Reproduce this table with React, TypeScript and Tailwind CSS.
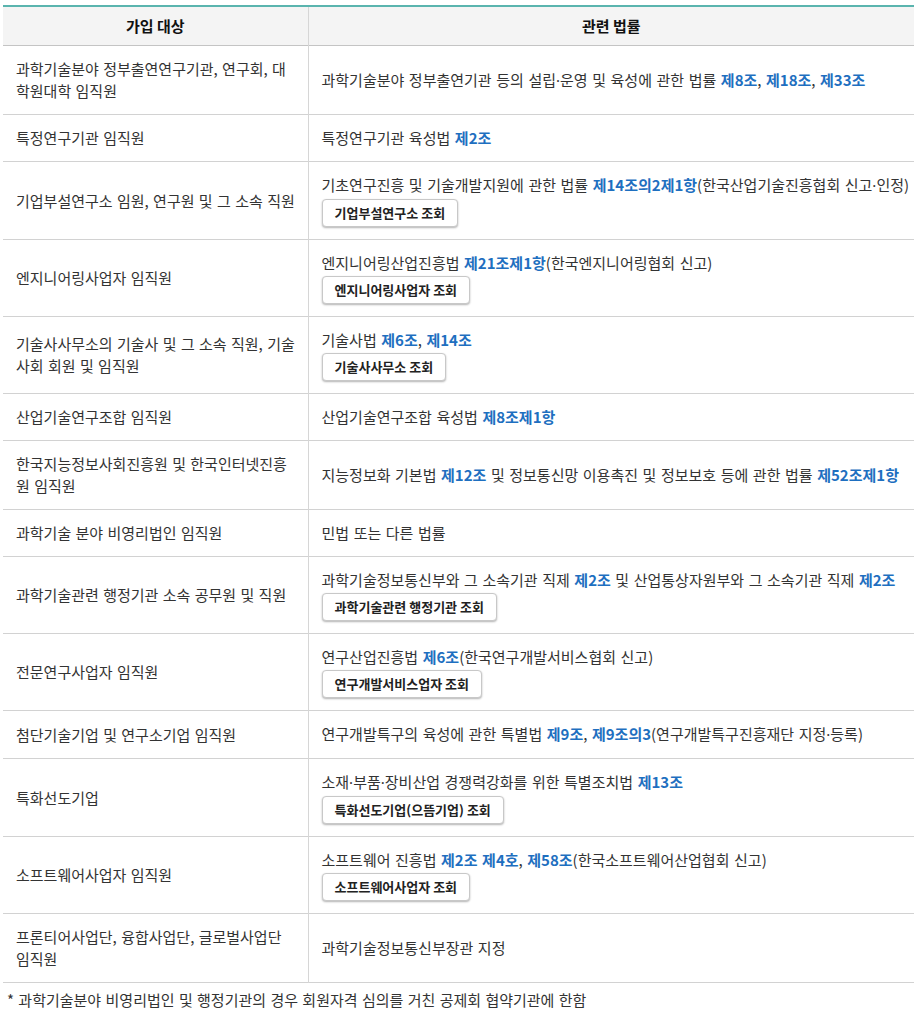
import React from "react";

type Part = string | { b: string };
type Row = { left: string; right: Part[]; button?: string };

const rows: Row[] = [
  {
    left: "과학기술분야 정부출연연구기관, 연구회, 대학원대학 임직원",
    right: ["과학기술분야 정부출연기관 등의 설립·운영 및 육성에 관한 법률 ", { b: "제8조" }, ", ", { b: "제18조" }, ", ", { b: "제33조" }],
  },
  { left: "특정연구기관 임직원", right: ["특정연구기관 육성법 ", { b: "제2조" }] },
  {
    left: "기업부설연구소 임원, 연구원 및 그 소속 직원",
    right: ["기초연구진흥 및 기술개발지원에 관한 법률 ", { b: "제14조의2제1항" }, "(한국산업기술진흥협회 신고·인정)"],
    button: "기업부설연구소 조회",
  },
  {
    left: "엔지니어링사업자 임직원",
    right: ["엔지니어링산업진흥법 ", { b: "제21조제1항" }, "(한국엔지니어링협회 신고)"],
    button: "엔지니어링사업자 조회",
  },
  {
    left: "기술사사무소의 기술사 및 그 소속 직원, 기술사회 회원 및 임직원",
    right: ["기술사법 ", { b: "제6조" }, ", ", { b: "제14조" }],
    button: "기술사사무소 조회",
  },
  { left: "산업기술연구조합 임직원", right: ["산업기술연구조합 육성법 ", { b: "제8조제1항" }] },
  {
    left: "한국지능정보사회진흥원 및 한국인터넷진흥원 임직원",
    right: ["지능정보화 기본법 ", { b: "제12조" }, " 및 정보통신망 이용촉진 및 정보보호 등에 관한 법률 ", { b: "제52조제1항" }],
  },
  { left: "과학기술 분야 비영리법인 임직원", right: ["민법 또는 다른 법률"] },
  {
    left: "과학기술관련 행정기관 소속 공무원 및 직원",
    right: ["과학기술정보통신부와 그 소속기관 직제 ", { b: "제2조" }, " 및 산업통상자원부와 그 소속기관 직제 ", { b: "제2조" }],
    button: "과학기술관련 행정기관 조회",
  },
  {
    left: "전문연구사업자 임직원",
    right: ["연구산업진흥법 ", { b: "제6조" }, "(한국연구개발서비스협회 신고)"],
    button: "연구개발서비스업자 조회",
  },
  {
    left: "첨단기술기업 및 연구소기업 임직원",
    right: ["연구개발특구의 육성에 관한 특별법 ", { b: "제9조" }, ", ", { b: "제9조의3" }, "(연구개발특구진흥재단 지정·등록)"],
  },
  {
    left: "특화선도기업",
    right: ["소재·부품·장비산업 경쟁력강화를 위한 특별조치법 ", { b: "제13조" }],
    button: "특화선도기업(으뜸기업) 조회",
  },
  {
    left: "소프트웨어사업자 임직원",
    right: ["소프트웨어 진흥법 ", { b: "제2조 제4호" }, ", ", { b: "제58조" }, "(한국소프트웨어산업협회 신고)"],
    button: "소프트웨어사업자 조회",
  },
  { left: "프론티어사업단, 융합사업단, 글로벌사업단 임직원", right: ["과학기술정보통신부장관 지정"] },
];

function Plain({ text }: { text: string }) {
  const pieces = text.split("·");
  return (
    <>
      {pieces.map((p, i) => (
        <React.Fragment key={i}>
          {i > 0 && (
            <span className="leading-[23px]" style={{ fontFamily: '"Noto Sans", sans-serif' }}>
              ·
            </span>
          )}
          {p}
        </React.Fragment>
      ))}
    </>
  );
}

export default function App() {
  return (
    <div
      className="w-[914px] bg-white pt-[5px] text-[15px] leading-[22px] text-[#333]"
      style={{ fontFamily: '"Noto Sans CJK KR", "Noto Sans", sans-serif' }}
    >
      <table className="ml-[3px] w-[911px] table-fixed border-collapse">
        <colgroup>
          <col className="w-[305px]" />
          <col />
        </colgroup>
        <thead>
          <tr className="border-t-2 border-t-[#5ab4ae] border-b border-b-[#c4c4c4] bg-[#f4f4f4]">
            <th className="border-r border-r-[#d6d6d6] py-[8px] text-center font-bold text-[#111]">가입 대상</th>
            <th className="py-[8px] text-center font-bold text-[#111]">관련 법률</th>
          </tr>
        </thead>
        <tbody>
          {rows.map((r, i) => (
            <tr key={i} className="border-b border-b-[#d2d2d2]">
              <td className="border-r border-r-[#d6d6d6] pl-[13px] pr-[11px] py-[12px] align-middle [word-spacing:1px]">
                {r.left}
              </td>
              <td className="pl-[13px] pr-[4px] py-[12px] align-middle [word-spacing:1.2px]">
                <div>
                  {r.right.map((p, j) =>
                    typeof p === "string" ? (
                      <Plain key={j} text={p} />
                    ) : (
                      <span key={j} className="font-bold text-[#1e6fc0]">
                        {p.b}
                      </span>
                    )
                  )}
                </div>
                {r.button && (
                  <button className="mt-[2px] h-[28px] rounded-[4px] border border-[#c8c8c8] bg-white px-3 text-[13px] font-bold leading-[26px] text-[#222] shadow-[0_1px_2px_rgba(0,0,0,0.3)] [word-spacing:0px]">
                    {r.button}
                  </button>
                )}
              </td>
            </tr>
          ))}
        </tbody>
      </table>
      <p className="mt-[6px] pl-[7px] [word-spacing:1px]">
        * 과학기술분야 비영리법인 및 행정기관의 경우 회원자격 심의를 거친 공제회 협약기관에 한함
      </p>
    </div>
  );
}
